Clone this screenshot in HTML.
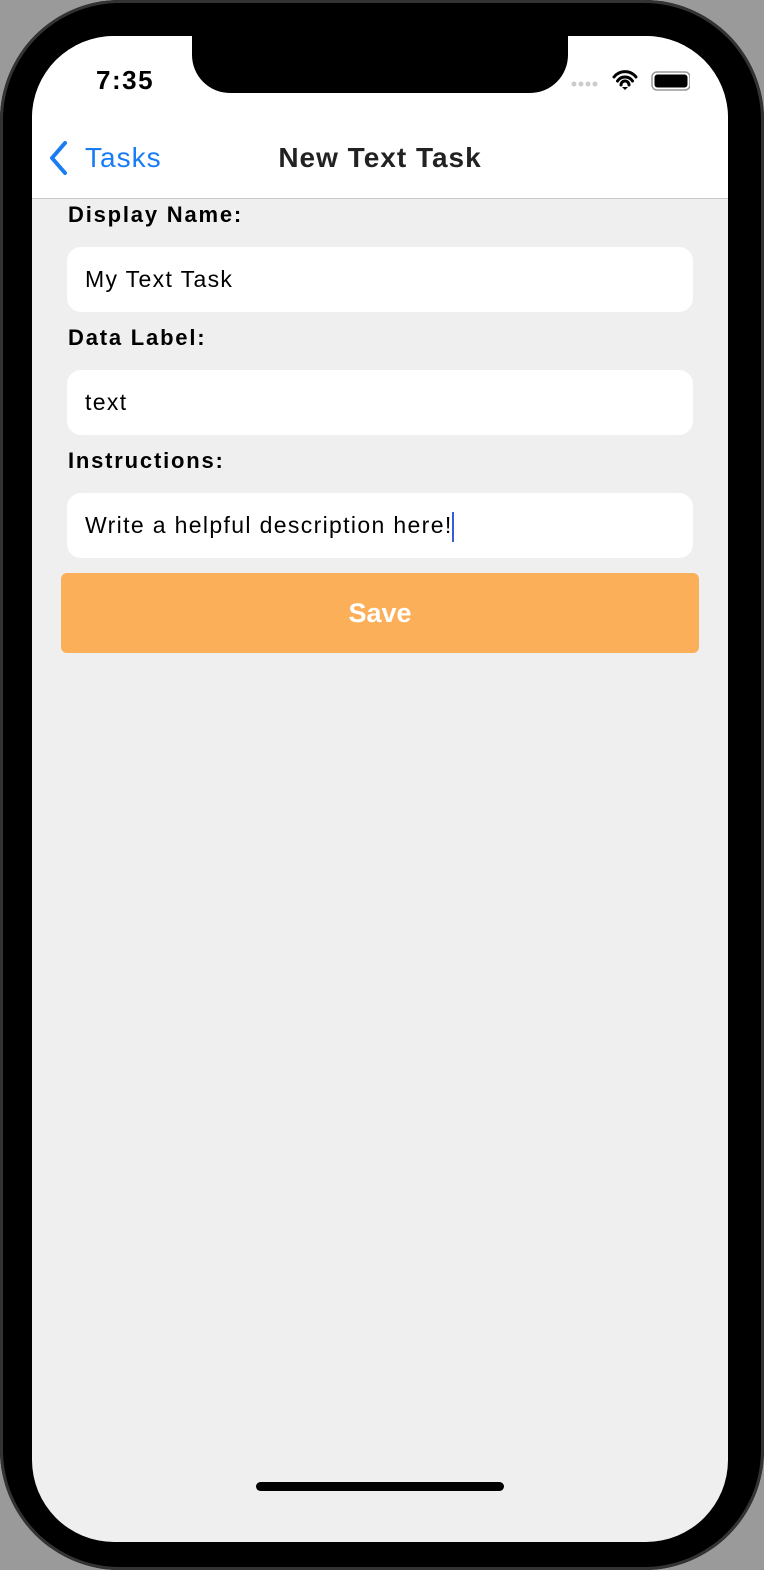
<!DOCTYPE html>
<html><head><style>
body{margin:0;width:764px;height:1570px;background:#9a9a9a;overflow:hidden;font-family:"Liberation Sans",sans-serif;position:relative}
.phone{position:absolute;left:0;top:0;width:764px;height:1570px;background:#000;border-radius:120px;box-shadow:inset 0 0 0 3px #333}
.screen{position:absolute;left:32px;top:36px;width:696px;height:1506px;background:#efefef;border-radius:82px;overflow:hidden}
.top{position:absolute;left:0;top:0;width:696px;height:162px;background:#fff;border-bottom:1px solid #c8c8c8}
.notch{position:absolute;left:160px;top:0;width:376px;height:57px;background:#000;border-radius:0 0 38px 38px}
.time{position:absolute;left:64px;top:29px;font-size:26px;font-weight:bold;color:#000;letter-spacing:1.5px}
.back{position:absolute;left:53px;top:106px;font-size:28px;color:#1a7cf5;letter-spacing:1px}
.title{position:absolute;left:0;width:696px;text-align:center;top:106px;font-size:28px;font-weight:bold;color:#222;letter-spacing:1px}
.lbl{position:absolute;left:36px;font-size:22px;font-weight:bold;color:#000;letter-spacing:1.8px}
.fld{position:absolute;left:35px;width:626px;height:65px;background:#fff;border-radius:14px;font-size:23px;color:#000;line-height:65px;padding-left:18px;box-sizing:border-box;letter-spacing:1.35px}
.save{position:absolute;left:29px;top:537px;width:638px;height:80px;background:#fbaf59;border-radius:6px;color:#fff;font-weight:bold;font-size:27px;text-align:center;line-height:80px}
.home{position:absolute;left:224px;top:1446px;width:248px;height:9px;background:#000;border-radius:5px}
</style></head><body>
<div class="phone"></div>
<div class="screen">
<div class="top"></div>
<div class="notch"></div>
<div class="time">7:35</div>
<svg style="position:absolute;left:538px;top:34px" width="120" height="22" viewBox="0 0 120 22">
<g fill="#ccc"><circle cx="4" cy="14" r="2.5"/><circle cx="11" cy="14" r="2.5"/><circle cx="18" cy="14" r="2.5"/><circle cx="25" cy="14" r="2.5"/></g>
<path d="M44 7a14 14 0 0 1 22 0M47.5 11a9 9 0 0 1 15 0M51 15a4 4 0 0 1 8 0" stroke="#000" stroke-width="3" fill="none" stroke-linecap="round"/>
<path d="M52 17l3 3 3-3z" fill="#000"/>
<rect x="82" y="2" width="38" height="18" rx="5" fill="none" stroke="#999" stroke-width="1.5"/>
<rect x="84.5" y="4.5" width="33" height="13" rx="3" fill="#000"/>
</svg>
<svg style="position:absolute;left:16px;top:104px" width="20" height="36" viewBox="0 0 20 36"><path d="M17 3L4 18l13 15" stroke="#1a7cf5" stroke-width="4" fill="none" stroke-linecap="round" stroke-linejoin="round"/></svg>
<div class="back">Tasks</div>
<div class="title">New Text Task</div>
<div class="lbl" style="top:166px">Display Name:</div>
<div class="fld" style="top:211px">My Text Task</div>
<div class="lbl" style="top:289px">Data Label:</div>
<div class="fld" style="top:334px">text</div>
<div class="lbl" style="top:412px">Instructions:</div>
<div class="fld" style="top:457px">Write a helpful description here!<span style="display:inline-block;width:2px;height:30px;background:#3a5bd9;vertical-align:middle;margin-left:-1px"></span></div>
<div class="save">Save</div>
<div class="home"></div>
</div>
</body></html>
